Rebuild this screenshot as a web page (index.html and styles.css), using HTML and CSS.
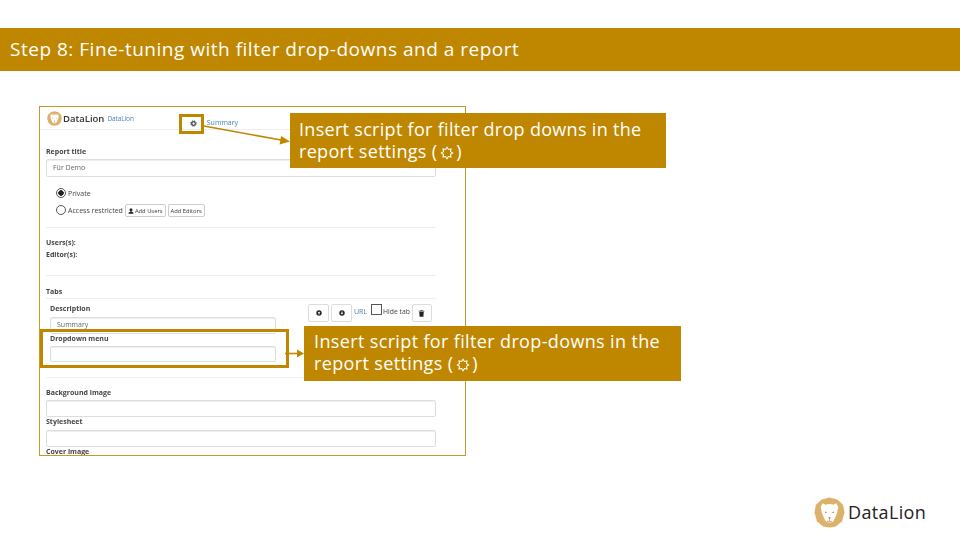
FILE: index.html
```html
<!DOCTYPE html>
<html lang="en">
<head>
<meta charset="utf-8">
<title>Step 8</title>
<link rel="stylesheet" href="styles.css">
</head>
<body>
<svg class="defs" width="0" height="0" aria-hidden="true">
  <symbol id="lion" viewBox="0 0 32 32">
    <polygon points="16,0.5 24,2.5 30,8 31.5,16 29,25 22.5,30.5 16,31.5 9.5,30.5 3,25 .5,16 2,8 8,2.5" fill="#dcb16a"/>
    <path d="M9 6.5 L12 8 Q16 6.5 20 8 L23 6.5 L25 10 L24 16 L22 21 L20 25 Q16 28 12 25 L10 21 L8 16 L7 10Z" fill="#fff"/>
    <path d="M11.5 15 L14 16 L11.5 16.5ZM20.5 15 L18 16 L20.5 16.5ZM14.5 21 H17.5 L16 23Z" fill="#a9803c"/>
    <path d="M16 23V25M13.5 25 Q16 26 18.5 25" stroke="#a9803c" stroke-width=".7" fill="none"/>
  </symbol>
  <symbol id="sun" viewBox="0 0 16 16">
    <path d="M8 1.5 L9.6 4 L12.6 3.4 L12 6.4 L14.5 8 L12 9.6 L12.6 12.6 L9.6 12 L8 14.5 L6.4 12 L3.4 12.6 L4 9.6 L1.5 8 L4 6.4 L3.4 3.4 L6.4 4Z" fill="none" stroke="#fff" stroke-width="1.2"/>
  </symbol>
  <symbol id="circle-up" viewBox="0 0 10 10">
    <circle cx="5" cy="5" r="4.5" fill="#222"/>
    <path d="M5 2.4 L7.2 5 H5.9 V7.4 H4.1 V5 H2.8Z" fill="#fff"/>
  </symbol>
  <symbol id="circle-down" viewBox="0 0 10 10">
    <circle cx="5" cy="5" r="4.5" fill="#222"/>
    <path d="M5 7.6 L7.2 5 H5.9 V2.6 H4.1 V5 H2.8Z" fill="#fff"/>
  </symbol>
</svg>
<main class="slide">
  <h1 class="band">Step 8: Fine-tuning with filter drop-downs and a report</h1>

  <section class="shot">
    <div class="app-head">
      <svg class="app-logo"><use href="#lion"/></svg>
      <span class="app-brand">DataLion</span>
      <a class="app-link app-brand-link">DataLion</a>
      <svg class="gear" viewBox="0 0 16 16"><circle cx="8" cy="8" r="4.2" fill="none" stroke="#444" stroke-width="3"/><circle cx="8" cy="8" r="6.6" fill="none" stroke="#444" stroke-width="1.8" stroke-dasharray="2.6 2.6"/></svg>
      <a class="app-link app-summary">Summary</a>
    </div>

    <label class="lbl lbl-title">Report title</label>
    <div class="field field-title">Für Demo</div>

    <div class="radio-row radio-first"><span class="radio on"></span><span>Private</span></div>
    <div class="radio-row"><span class="radio"></span><span>Access restricted</span>
      <span class="mini"><svg class="user" viewBox="0 0 10 10"><path d="M5 .5a2.3 2.6 0 0 1 0 5.4a2.3 2.6 0 0 1 0-5.4ZM.8 9.5 1.2 7.4 3.6 6.3H6.4L8.8 7.4 9.2 9.5Z" fill="#222"/></svg>Add Users</span>
      <span class="mini">Add Editors</span>
    </div>
    <hr class="rule rule-a">
    <div class="lbl lbl-users">Users(s):</div>
    <div class="lbl lbl-editors">Editor(s):</div>
    <hr class="rule rule-b">
    <div class="lbl lbl-tabs">Tabs</div>
    <hr class="rule rule-c">

    <div class="tab">
      <div class="tab-left">
        <label class="lbl">Description</label>
        <div class="field field-tab field-desc">Summary</div>
        <label class="lbl lbl-drop">Dropdown menu</label>
        <div class="field field-tab field-drop"></div>
      </div>
      <div class="tab-tools">
        <span class="tool"><svg class="dot"><use href="#circle-up"/></svg></span>
        <span class="tool"><svg class="dot"><use href="#circle-down"/></svg></span>
        <a class="app-link">URL</a>
        <span class="check"></span>
        <span class="hide">Hide tab</span>
        <span class="tool tool-trash"><svg class="trash" viewBox="0 0 10 10"><path d="M3.5 1V.3H6.5V1H9V2H1V1ZM1.8 2.8H8.2L7.7 9.7H2.3Z" fill="#222"/></svg></span>
      </div>
    </div>
    <hr class="rule rule-d">

    <label class="lbl lbl-bg">Background image</label>
    <div class="field field-wide field-bg"></div>
    <label class="lbl lbl-style">Stylesheet</label>
    <div class="field field-wide"></div>
    <label class="lbl lbl-cover">Cover image</label>
  </section>

  <svg class="logo-mark"><use href="#lion"/></svg>
  <span class="logo-word">DataLion</span>

  <div class="hl hl-gear"></div>
  <div class="hl hl-drop"></div>
  <svg class="arrows" viewBox="0 0 960 540" aria-hidden="true">
    <path d="M204 126 L281 140" stroke="#bf8700" stroke-width="1.6" fill="none"/>
    <path d="M290 141.5 L281 136 L279.6 144.5Z" fill="#bf8700"/>
    <path d="M285 353.5 H298" stroke="#bf8700" stroke-width="1.6" fill="none"/>
    <path d="M304 353.5 L297 349.5 V357.5Z" fill="#bf8700"/>
  </svg>
  <aside class="note note-a">Insert script for filter drop downs in the report settings (<svg class="sun"><use href="#sun"/></svg>)</aside>
  <aside class="note note-b">Insert script for filter drop-downs in the report settings (<svg class="sun"><use href="#sun"/></svg>)</aside>
</main>
</body>
</html>
```

FILE: styles.css
```css
* { box-sizing: border-box; }
html, body { margin: 0; padding: 0; background: #fff; }
.defs { position: absolute; }
.slide {
  position: relative;
  width: 960px;
  height: 540px;
  overflow: hidden;
  padding-top: 28px;
  font-family: "Open Sans", "Liberation Sans", sans-serif;
}
.band {
  margin: 0;
  height: 43px;
  padding: 0 0 0 10px;
  background: #bf8700;
  color: #fff;
  font-family: "Open Sans", sans-serif;
  font-weight: 400;
  font-size: 19px;
  line-height: 43px;
  letter-spacing: .51px;
}
.shot {
  width: 427px;
  height: 350px;
  margin: 35px 0 0 39px;
  border: 1px solid #c29a2c;
  overflow: hidden;
  color: #444;
  font-size: 7px;
  padding: 0 0 0 6px;
  filter: blur(.3px);
}
.app-head {
  display: flex;
  align-items: center;
  height: 23px;
  margin-left: -6px;
  padding-left: 7px;
  border-bottom: 1px solid #eee;
}
.app-logo { width: 15px; height: 15px; flex: none; }
.app-brand { font-size: 9.5px; color: #333; margin-left: 1px; font-weight: 600; }
.app-link { color: #4a80b8; font-size: 7px; }
.app-brand-link { margin-left: 3px; font-size: 6.5px; letter-spacing: -.1px; }
.gear { width: 7px; height: 7px; margin: 10px 0 0 56px; flex: none; }
.app-summary { margin: 8px 0 0 10px; }
.lbl { display: block; font-weight: 700; font-size: 7px; line-height: 10px; color: #444; }
.lbl-title { margin-top: 17px; }
.field {
  border: 1px solid #ddd;
  border-radius: 2px;
  box-shadow: inset 0 1px 1px #eee;
  color: #666;
  padding-left: 6px;
  font-size: 7px;
}
.field-title { width: 390px; height: 18px; line-height: 16px; margin-top: 2px; }
.radio-row { display: flex; align-items: center; gap: 2px; height: 17px; padding-left: 10px; color: #444; }
.radio-first { margin-top: 8px; }
.radio { width: 10px; height: 10px; border: 1px solid #555; border-radius: 50%; background: #fff; margin-top: -2px; }
.radio.on { background: radial-gradient(circle, #222 0 2.5px, #fff 3px); }
.mini {
  display: inline-flex;
  align-items: center;
  gap: 1px;
  height: 13px;
  padding: 0 2px;
  border: 1px solid #ccc;
  border-radius: 2px;
  font-size: 5.8px;
  color: #333;
}
.user { width: 6px; height: 6px; }
.rule { border: 0; border-top: 1px solid #eee; margin: 0; width: 390px; }
.rule-a { margin-top: 8px; }
.lbl-users { margin-top: 10px; }
.lbl-editors { margin-top: 2px; }
.rule-b { margin-top: 15px; }
.lbl-tabs { margin-top: 11px; }
.rule-c { margin-top: 1px; }
.tab { display: flex; height: 78px; padding: 5px 0 0 4px; width: 390px; }
.tab-left { width: 226px; flex: none; }
.field-tab { width: 226px; line-height: 14px; }
.field-desc { height: 17px; margin-top: 3px; }
.lbl-drop { margin-top: 0; }
.field-drop { height: 16px; margin-top: 2px; }
.tab-tools { display: flex; align-items: flex-start; margin-left: 32px; }
.tool {
  display: flex;
  align-items: center;
  justify-content: center;
  width: 21px;
  height: 18px;
  margin-right: 2px;
  border: 1px solid #ddd;
  border-radius: 2px;
}
.dot { width: 6px; height: 6px; }
.tab-tools .app-link { line-height: 16px; }
.check { width: 11px; height: 11px; border: 1px solid #555; margin: 0 1px 0 4px; }
.hide { font-size: 6.8px; line-height: 16px; margin-right: 2px; }
.tool-trash { width: 20px; margin-right: 0; }
.trash { width: 7px; height: 7px; }
.rule-d { margin-top: 0; }
.lbl-bg { margin-top: 10px; }
.field-wide { width: 390px; height: 17px; margin-top: 3px; }
.field-bg { margin-top: 2px; }
.lbl-style { margin-top: 0; }
.lbl-cover { margin-top: 0; }

.logo-mark { position: absolute; left: 814px; top: 497px; width: 31px; height: 31px; }
.logo-word { position: absolute; left: 848px; top: 499px; font-size: 18px; line-height: 26px; color: #222; letter-spacing: .35px; }
.hl { position: absolute; border: 3px solid #bf8700; }
.hl-gear { left: 179px; top: 114px; width: 25px; height: 20px; }
.hl-drop { left: 40px; top: 329px; width: 249px; height: 39px; }
.arrows { position: absolute; left: 0; top: 0; width: 960px; height: 540px; }
.note {
  position: absolute;
  width: 376px;
  height: 55px;
  padding: 5px 9px;
  background: #bf8700;
  color: #fff;
  font-size: 18px;
  line-height: 22px;
  letter-spacing: .3px;
}
.note-a { left: 290px; top: 113px; }
.note-b { left: 304px; top: 326px; width: 377px; padding: 4px 10px; letter-spacing: .36px; }
.sun { width: 14px; height: 14px; margin: 0 2px 0 3px; vertical-align: -2px; }
```
